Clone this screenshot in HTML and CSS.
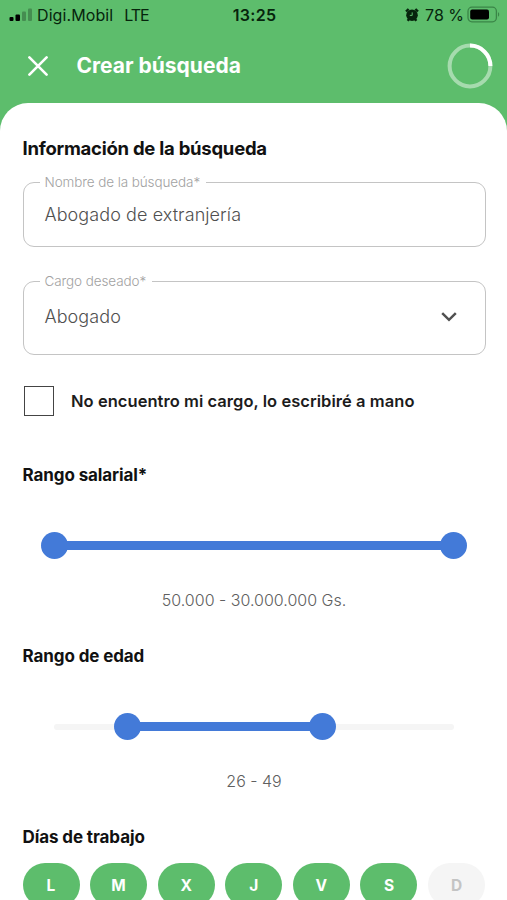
FILE: index.html
```html
<!DOCTYPE html>
<html lang="es">
<head>
  <meta charset="UTF-8">
  <title>Crear búsqueda</title>
  <link rel="stylesheet" href="styles.css">
</head>
<body>
  <div class="screen">
    <div class="status-bar">
      <div class="carrier">
        <svg class="signal" width="24" height="14" viewBox="0 0 24 14">
          <rect x="0.5" y="9" width="4" height="4" rx="1"/>
          <rect x="6.5" y="6.5" width="4.5" height="6.5" rx="1"/>
          <rect x="13" y="3.5" width="4" height="9.5" rx="1" opacity="0.25"/>
          <rect x="19" y="0.5" width="4" height="12.5" rx="1" opacity="0.25"/>
        </svg>
        <span class="carrier-name">Digi.Mobil</span>
        <span class="network">LTE</span>
      </div>
      <span class="time">13:25</span>
      <div class="battery">
        <svg class="alarm" width="14" height="14" viewBox="0 0 14 14">
          <path d="M1 3.5 3.6 1M13 3.5 10.4 1M2.6 12.8l1.8-2M11.4 12.8l-1.8-2" stroke="#06240c" stroke-width="2.4"/>
          <circle cx="7" cy="7.2" r="5.8" fill="#06240c"/>
          <path d="M7.2 4.4v3H4.8" fill="none" stroke="#5dbd6c" stroke-width="1"/>
        </svg>
        <span class="percent">78 %</span>
        <svg width="33" height="17" viewBox="0 0 33 17">
          <rect x="1" y="1.2" width="28.4" height="14.6" rx="4" fill="none" stroke="#3a8547" stroke-width="1.3"/>
          <rect x="3.2" y="3.4" width="18.8" height="10.2" rx="2" fill="#000"/>
          <path d="M31 6.3c1.6.6 1.6 3.8 0 4.4z" fill="#3a8547"/>
        </svg>
      </div>
    </div>

    <header class="header">
      <svg class="close" width="20" height="20" viewBox="0 0 20 20">
        <path d="M1.4 1.4l17.2 17.2M18.6 1.4L1.4 18.6" stroke="#fff" stroke-width="2.6" stroke-linecap="round"/>
      </svg>
      <h1>Crear búsqueda</h1>
      <svg class="progress" width="46" height="46" viewBox="0 0 46 46" fill="none" stroke="#fff" stroke-width="4">
        <circle cx="23" cy="23" r="20.4" opacity="0.45"/>
        <path d="M23 2.6A20.4 20.4 0 0 1 43.4 23"/>
      </svg>
    </header>

    <main class="sheet">
      <h2>Información de la búsqueda</h2>

      <fieldset class="field field-name">
        <legend>Nombre de la búsqueda*</legend>
        <span class="name-value">Abogado de extranjería</span>
      </fieldset>

      <fieldset class="field field-job">
        <legend>Cargo deseado*</legend>
        <div class="select">
          <span class="job-value">Abogado</span>
          <svg width="18" height="12" viewBox="0 0 18 12">
            <path d="M2.2 2.2L9 8.8l6.8-6.6" fill="none" stroke="#505050" stroke-width="2.5"/>
          </svg>
        </div>
      </fieldset>

      <div class="check-row">
        <span class="checkbox"></span>
        <span class="check-label">No encuentro mi cargo, lo escribiré a mano</span>
      </div>

      <section class="range">
        <h3 class="title-salary">Rango salarial*</h3>
        <div class="slider slider-salary">
          <span class="thumb"></span>
          <span class="bar"></span>
          <span class="thumb"></span>
        </div>
        <p class="salary">50.000 - 30.000.000 Gs.</p>
      </section>

      <section class="range">
        <h3 class="title-age">Rango de edad</h3>
        <div class="slider slider-age">
          <span class="rail rail-left"></span>
          <span class="thumb"></span>
          <span class="bar"></span>
          <span class="thumb"></span>
          <span class="rail rail-right"></span>
        </div>
        <p class="age">26 - 49</p>
      </section>

      <section class="days-section">
        <h3 class="title-days">Días de trabajo</h3>
        <div class="days">
          <span class="day">L</span>
          <span class="day">M</span>
          <span class="day">X</span>
          <span class="day">J</span>
          <span class="day">V</span>
          <span class="day">S</span>
          <span class="day off">D</span>
        </div>
      </section>
    </main>
  </div>
</body>
</html>
```
FILE: styles.css
```css
* {
  box-sizing: border-box;
}
body {
  margin: 0;
  font-family: Inter, "Liberation Sans", sans-serif;
  background-color: #ffffff;
}
svg {
  display: block;
  flex: none;
}
h1, h2, h3, p {
  margin: 0;
  white-space: nowrap;
}
.screen {
  width: 507px;
  height: 900px;
  overflow: hidden;
  background: linear-gradient(#5dbd6c 200px, #ffffff 200px);
}
.status-bar {
  display: grid;
  grid-template-columns: 1fr auto 1fr;
  align-items: center;
  height: 29px;
  padding: 0 7px 0 9px;
  color: #06240c;
  font-size: 16px;
  white-space: nowrap;
}
.carrier, .battery {
  display: flex;
  align-items: center;
}
.signal {
  margin-right: 4px;
}
.carrier-name {
  letter-spacing: 0.1px;
}
.network {
  margin-left: 11px;
  letter-spacing: -1.1px;
}
.time {
  font-weight: 600;
  letter-spacing: 0.3px;
}
.battery {
  justify-content: flex-end;
}
.percent {
  margin: 0 3px 0 6px;
}
.header {
  display: flex;
  align-items: center;
  height: 73px;
  margin-bottom: 1px;
  padding: 0 14px 0 28px;
  color: #ffffff;
}
.header h1 {
  flex: 1;
  margin-left: 28.5px;
  font-size: 21px;
  font-weight: 700;
}
.sheet {
  height: 797px;
  padding: 32px 21.5px 0 22.5px;
  border-radius: 28px 28px 0 0;
  background-color: #ffffff;
}
h2 {
  font-size: 18.5px;
  line-height: 26px;
  font-weight: 700;
  letter-spacing: -0.25px;
  color: #111111;
}
.field {
  margin: 0;
  padding: 0 27px 0 16px;
  border: 1.5px solid #c4c4c4;
  border-radius: 11px;
  color: #505050;
  font-size: 18px;
  font-weight: 300;
  letter-spacing: 0.08px;
}
.field legend {
  height: 14px;
  padding: 0 6px 0 5px;
  color: #a2a2a2;
  font-size: 13.5px;
  line-height: 14px;
  letter-spacing: -0.1px;
}
.field-name {
  height: 72px;
  margin-top: 14px;
}
.name-value {
  display: block;
  margin-left: 5px;
  line-height: 51px;
}
.field-job {
  height: 81px;
  margin-top: 27px;
}
.select {
  display: flex;
  align-items: center;
  justify-content: space-between;
  height: 57px;
  padding-left: 5px;
}
.check-row {
  display: flex;
  align-items: center;
  height: 30px;
  margin-top: 31px;
  padding-left: 1px;
}
.checkbox {
  width: 30px;
  height: 30px;
  border: 1.5px solid #444444;
}
.check-label {
  margin-left: 17.5px;
  color: #1c1c1c;
  font-size: 16.5px;
  font-weight: 600;
  letter-spacing: 0.05px;
  white-space: nowrap;
}
h3 {
  font-size: 17px;
  line-height: 24px;
  font-weight: 700;
  letter-spacing: -0.1px;
  color: #111111;
}
.range {
  height: 181px;
}
.check-row + .range {
  margin-top: 47px;
}
.slider {
  display: flex;
  align-items: center;
  width: 426px;
  height: 27px;
  margin: 45px 0 31px 18.5px;
}
.thumb {
  flex: none;
  width: 27px;
  height: 27px;
  border-radius: 50%;
  background-color: #437ad8;
}
.bar {
  flex: 1;
  height: 9px;
  margin: 0 -2px;
  background-color: #437ad8;
}
.rail {
  height: 6px;
  background-color: #f5f5f5;
}
.rail-left {
  width: 60px;
  margin-left: 13px;
  border-radius: 3px 0 0 3px;
}
.rail-right {
  width: 118px;
  margin-right: 13px;
  border-radius: 0 3px 3px 0;
}
.range p {
  color: #606060;
  font-size: 16px;
  font-weight: 300;
  line-height: 20px;
  text-align: center;
}
.days {
  display: flex;
  gap: 10.6px;
  margin-top: 14px;
}
.day {
  width: 57px;
  height: 44px;
  border-radius: 22px;
  background-color: #5dbd6c;
  color: #ffffff;
  font-size: 15.5px;
  font-weight: 700;
  line-height: 45px;
  text-align: center;
}
.day.off {
  background-color: #f5f5f5;
  color: #c4c4c4;
}
```
